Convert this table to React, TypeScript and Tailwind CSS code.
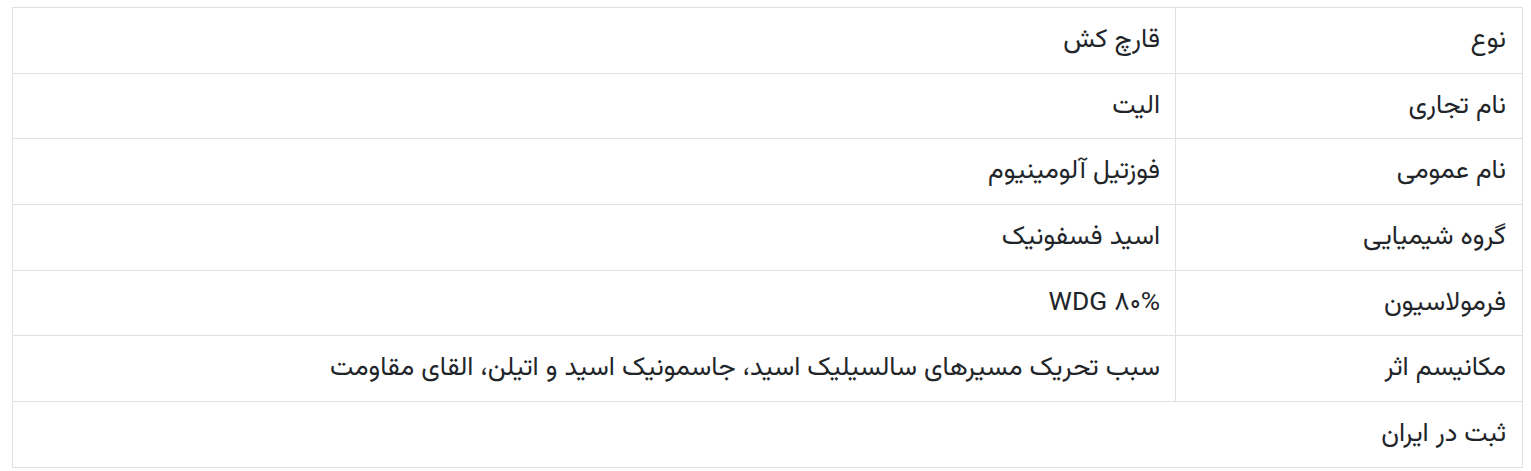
import React from "react";

const rows: { label: string; value?: string }[] = [
  { label: "نوع", value: "قارچ کش" },
  { label: "نام تجاری", value: "الیت" },
  { label: "نام عمومی", value: "فوزتیل آلومینیوم" },
  { label: "گروه شیمیایی", value: "اسید فسفونیک" },
  { label: "فرمولاسیون", value: "WDG ۸۰%" },
  { label: "مکانیسم اثر", value: "سبب تحریک مسیرهای سالسیلیک اسید، جاسمونیک اسید و اتیلن، القای مقاومت" },
  { label: "ثبت در ایران" },
];

export default function App() {
  return (
    <div className="bg-white min-h-[471px] pt-[7px] pl-[12px] pr-[8px] font-['Vazirmatn',sans-serif]">
      <table dir="rtl" className="w-full table-fixed border-collapse text-[26.3px] leading-[39px] text-[#212529]">
        <colgroup>
          <col className="w-[347px]" />
          <col />
        </colgroup>
        <tbody>
          {rows.map((r, i) =>
            r.value === undefined ? (
              <tr key={i}>
                <td colSpan={2} className="border border-[#dee2e6] px-[16px] py-[12.85px] text-right align-middle">
                  {r.label}
                </td>
              </tr>
            ) : (
              <tr key={i}>
                <td className="border border-[#dee2e6] px-[16px] py-[12.85px] text-right align-middle">{r.label}</td>
                <td className="border border-[#dee2e6] px-[15px] py-[12.85px] text-right align-middle">{r.value}</td>
              </tr>
            )
          )}
        </tbody>
      </table>
    </div>
  );
}
